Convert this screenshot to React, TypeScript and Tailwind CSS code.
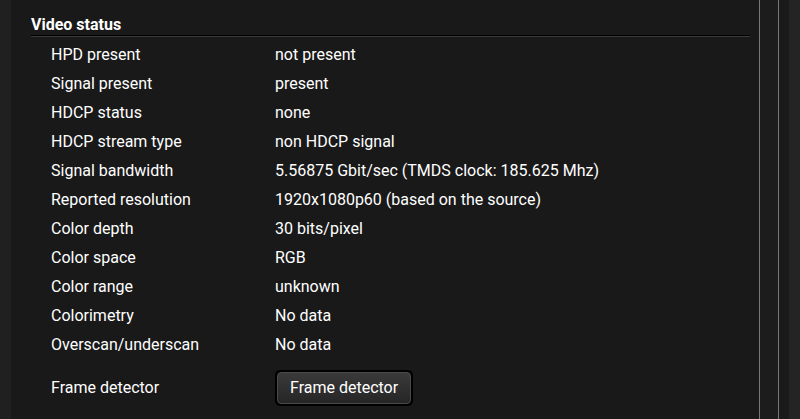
import React from "react";

const rows = [
  ["HPD present", "not present"],
  ["Signal present", "present"],
  ["HDCP status", "none"],
  ["HDCP stream type", "non HDCP signal"],
  ["Signal bandwidth", "5.56875 Gbit/sec (TMDS clock: 185.625 Mhz)"],
  ["Reported resolution", "1920x1080p60 (based on the source)"],
  ["Color depth", "30 bits/pixel"],
  ["Color space", "RGB"],
  ["Color range", "unknown"],
  ["Colorimetry", "No data"],
  ["Overscan/underscan", "No data"],
];

export default function App() {
  return (
    <div
      className="flex h-[419px] w-[800px] overflow-hidden bg-[#191919] text-[16px] text-white"
      style={{ fontFamily: "Roboto, 'Liberation Sans', sans-serif" }}
    >
      {/* left strip */}
      <div className="w-[11px] shrink-0 bg-[#202020]" />

      {/* main panel */}
      <div className="flex-1 pl-[20px] pr-[9px]">
        <div className="pt-[14px]">
          <h3 className="text-[16px] font-bold leading-[21px]">Video status</h3>
          <div className="h-[2px] border-t border-black bg-[#3a3a3a]" />
        </div>

        <div className="pl-[20px] pt-[3px]">
          {rows.map(([label, value]) => (
            <div key={label} className="flex h-[29px] items-center">
              <div className="w-[224px]">{label}</div>
              <div>{value}</div>
            </div>
          ))}
          <div className="mt-[11px] flex items-center">
            <div className="w-[224px]">Frame detector</div>
            <button className="h-[36px] rounded-[5px] border-2 border-black bg-black p-0">
              <span className="flex h-full items-center rounded-[4px] border border-[#4a4a4a] bg-gradient-to-b from-[#3a3a3a] to-[#262626] px-[12px] text-[16px] text-white">
                Frame detector
              </span>
            </button>
          </div>
        </div>
      </div>

      {/* right scroll area */}
      <div className="w-[1px] shrink-0 bg-[#777]" />
      <div className="w-[18px] shrink-0 bg-[#1c1c1c]" />
      <div className="w-[1px] shrink-0 bg-[#777]" />
      <div className="w-[10px] shrink-0 bg-[#1a1a1a]" />
      <div className="w-[11px] shrink-0 bg-[#242424]" />
    </div>
  );
}
